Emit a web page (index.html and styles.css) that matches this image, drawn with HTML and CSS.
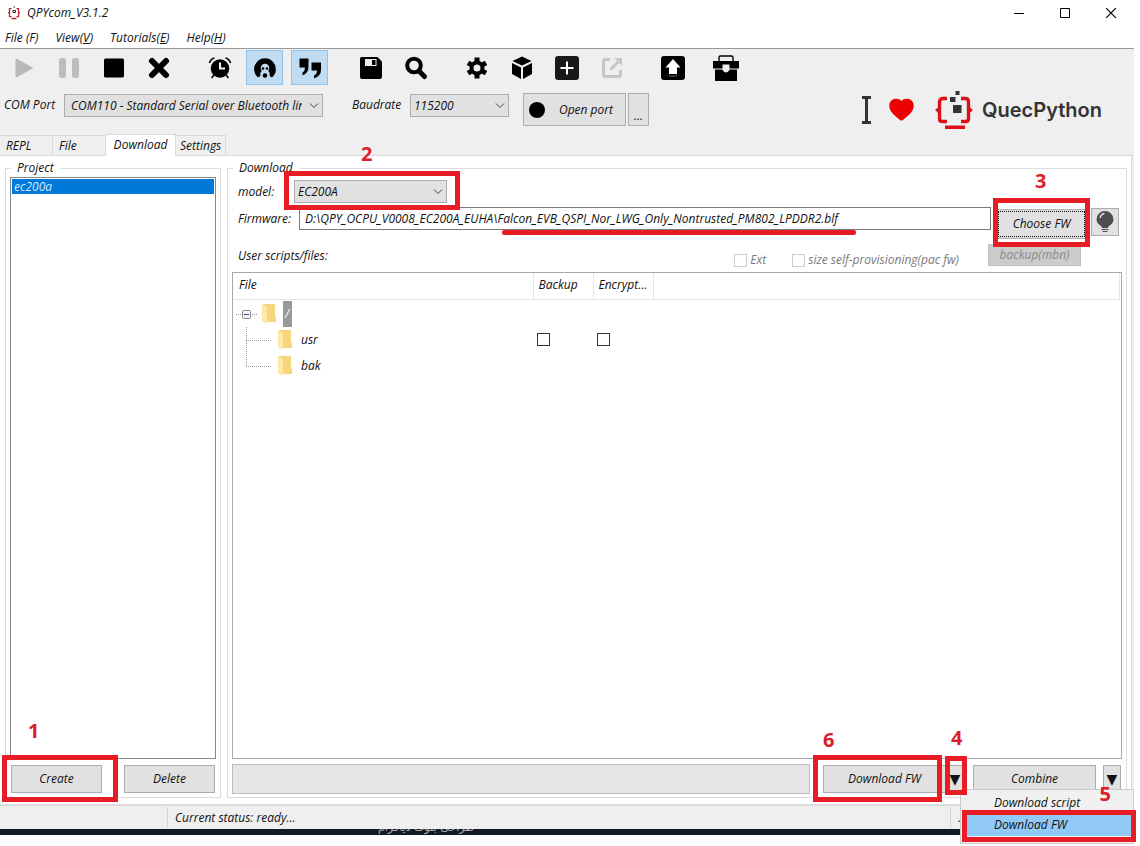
FILE: index.html
```html
<!DOCTYPE html>
<html lang="en">
<head>
<meta charset="utf-8">
<title>QPYcom_V3.1.2</title>
<link rel="stylesheet" href="styles.css">
</head>
<body>
<div class="app">
  <header class="titlebar">
    <svg class="app-icon" width="14" height="14" viewBox="0 0 14 14" fill="none" stroke="#c02030" stroke-width="1.300"><path d="M4.500 2.700H2.500v8h2M9.500 2.700h2v8h-2M1 6.700h1.500M11.500 6.700H13M4.500 12.500h5"/><path d="M6 4.500h2.500v2H6zM6.500 1h1.500" stroke="#222" stroke-width="1"/></svg>
    <h1 class="app-name">QPYcom_V3.1.2</h1>
    <div class="window-buttons">
      <button aria-label="Minimize"><svg width="10" height="10"><path d="M0 5.500h10" stroke="#000"/></svg></button>
      <button aria-label="Maximize"><svg width="10" height="10"><path d="M.5.5h9v9h-9z" fill="none" stroke="#000"/></svg></button>
      <button aria-label="Close"><svg width="10" height="10"><path d="M0 0l10 10M10 0L0 10" stroke="#000" stroke-width="1.2"/></svg></button>
    </div>
  </header>
  <nav class="menubar">
    <button>File (F)</button><button>View(<u>V</u>)</button><button>Tutorials(<u>E</u>)</button><button>Help(<u>H</u>)</button>
  </nav>
  <div class="toolbar">
    <div class="tool-group">
      <button aria-label="Run"><svg width="26" height="26" viewBox="0 0 26 26"><path d="M4.500 4v18q0 .8.800.500L21.500 13.500q.8-.5 0-1L5.300 3.500q-.8-.3-.8.500z" fill="#b8b8b8"/></svg></button>
      <button aria-label="Pause"><svg width="26" height="26" viewBox="0 0 26 26" fill="#bdbdbd"><rect x="3" y="3" width="7" height="20" rx="2.500"/><rect x="16" y="3" width="7" height="20" rx="2.500"/></svg></button>
      <button aria-label="Stop"><svg width="26" height="26" viewBox="0 0 26 26"><rect x="3" y="3.500" width="20" height="19" rx="1.500"/></svg></button>
      <button aria-label="Clear"><svg width="26" height="26" viewBox="0 0 26 26"><path d="M6 6l14 14M20 6L6 20" stroke="#000" stroke-width="6" stroke-linecap="round"/></svg></button>
    </div>
    <div class="tool-group">
      <button aria-label="Timer"><svg width="26" height="26" viewBox="0 0 26 26" fill="none" stroke="#000" stroke-width="2"><circle cx="13" cy="13.500" r="9.300" fill="#000" stroke="none"/><path d="M13 7.500v6h5" stroke="#eee"/><path d="M2.500 8q1-4 5-5M23.500 8q-1-4-5-5M7 20l-2.500 3M19 20l2.500 3" stroke-width="1.600"/></svg></button>
      <button class="checked" aria-label="Assistant"><svg width="26" height="26" viewBox="0 0 26 26"><path d="M6 22.500A10.900 10.900 0 1 1 20 22.500L17 20.500h-8z"/><circle cx="13" cy="13" r="4.300" fill="#bfdcf3"/><circle cx="13" cy="19.500" r="4.800" fill="#bfdcf3"/><circle cx="11" cy="13.500" r="1.300"/><circle cx="15" cy="13.500" r="1.300"/><circle cx="13" cy="20.500" r="2.300"/></svg></button>
      <button class="checked" aria-label="Quote"><svg width="26" height="26" viewBox="0 0 26 26"><path d="M2.500 3.500h9V12q0 6-6 8.500v-3q2.500-1.500 2.500-5H2.500zM14.500 7.500h9.500V15q0 6-7 8.500v-3q3-1.500 3-5h-5.500z"/></svg></button>
    </div>
    <div class="tool-group">
      <button aria-label="Save"><svg width="26" height="26" viewBox="0 0 26 26"><path d="M3.500 2h16L24 6.500v15q0 2.500-2 2.500H4q-2 0-2-2V3.500Q2 2 3.500 2z"/><path d="M7 4h11.500v7H7z" fill="#eee"/><path d="M14 5h3.500v5H14z"/></svg></button>
      <button aria-label="Search"><svg width="26" height="26" viewBox="0 0 26 26" fill="none" stroke="#000"><circle cx="11" cy="10.500" r="6.800" stroke-width="4"/><path d="M16 16l5.500 5.500" stroke-width="5" stroke-linecap="round"/></svg></button>
    </div>
    <div class="tool-group">
      <button aria-label="Settings"><svg width="26" height="26" viewBox="0 0 26 26" fill="none" stroke="#000"><path d="M13 2.500v21M4 7.800l18 10.400M4 18.200L22 7.800" stroke-width="5"/><circle cx="13" cy="13" r="5.500" fill="#eee" stroke-width="4"/></svg></button>
      <button aria-label="Package"><svg width="26" height="26" viewBox="0 0 26 26"><path d="M13 1.500L22.500 6 13 10.500 3.500 6zM3 8l9 4.500V24l-9-5zM23 8l-9 4.500V24l9-5z"/></svg></button>
      <button aria-label="Add"><svg width="26" height="26" viewBox="0 0 26 26"><rect x="1" y="1" width="24" height="24" rx="3" fill="#181818"/><path d="M13 6.500v13M6.500 13h13" stroke="#fff" stroke-width="2"/></svg></button>
      <button aria-label="Export"><svg width="26" height="26" viewBox="0 0 26 26" fill="none" stroke="#c6c6c6" stroke-width="3"><path d="M11 4.500H6Q4.500 4.500 4.500 6v14q0 1.500 1.500 1.500h14q1.500 0 1.500-1.500v-5M11.500 14.500L19 7"/><path d="M15 3h8v8z" fill="#c6c6c6" stroke="none"/></svg></button>
    </div>
    <div class="tool-group">
      <button aria-label="Upload"><svg width="26" height="26" viewBox="0 0 26 26"><rect x="1" y="1" width="24" height="24" rx="3"/><path d="M13 4l7.500 8.500H17V19H9v-6.500H5.500z" fill="#fff"/><path d="M9 21h8" stroke="#666"/></svg></button>
    </div>
    <button aria-label="Toolbox"><svg width="28" height="28" viewBox="0 0 28 28"><path d="M7 8V3.500Q7 2 8.500 2h11Q21 2 21 3.500V8" fill="none" stroke="#000" stroke-width="1.400"/><path d="M1 7h26v7.500H1zM3 15.500h22V27H3z"/><path d="M10.500 10.500h7V16q-3.500 5-7 0z" fill="#eee"/></svg></button>
  </div>
  <div class="portbar">
    <label for="port">COM Port</label>
    <div class="combo combo-port"><select id="port"><option>COM110 - Standard Serial over Bluetooth link</option></select><svg class="chevron" width="10" height="6"><path d="M1 .5l4 4 4-4" fill="none" stroke="#444"/></svg></div>
    <label class="baud-label" for="baud">Baudrate</label>
    <div class="combo combo-baud"><select id="baud"><option>115200</option></select><svg class="chevron" width="10" height="6"><path d="M1 .5l4 4 4-4" fill="none" stroke="#444"/></svg></div>
    <button class="btn open-port"><svg width="16" height="16"><circle cx="8" cy="8" r="8"/></svg>Open port</button>
    <button class="btn more">...</button>
    <div class="brand">
      <svg width="9" height="28"><path d="M0 1.500h9M0 26.500h9M4.500 1v26" stroke="#333" stroke-width="3"/></svg>
      <svg class="heart" width="25" height="23" viewBox="0 0 25 23"><path d="M12.500 3C9.500-.8.300-.5.300 8c0 5 5 9.500 10.700 14q1.500 1 3 0C19.700 17.500 24.700 13 24.700 8 24.700-.5 15.500-.8 12.500 3z" fill="#ec0000"/></svg>
      <svg width="38" height="38" viewBox="0 0 38 38"><path d="M12 7.500H8Q4.500 7.500 4.500 11v17Q4.500 30.500 7.500 30.500H12M26 7.500h4.500q3 0 3 3.500v17q0 2.500-3 2.500H26" fill="none" stroke="#dc1018" stroke-width="3.400"/><path d="M4.500 15.500L0 19l4.500 4zM33.500 15.500L38 19l-4.500 4zM10 34.500h20v3.500H10z" fill="#dc1018"/><path d="M15 6h5.500v5H15zM20.500 0h4v4h-4zM18 14h8.500v8H18z" fill="#333"/></svg>
      <span>QuecPython</span>
    </div>
  </div>
  <div class="tabs" role="tablist">
    <button role="tab">REPL</button><button role="tab">File</button><button role="tab" class="active" aria-selected="true">Download</button><button role="tab" class="tab-settings">Settings</button>
  </div>
  <main class="page">
    <fieldset class="group project">
      <legend>Project</legend>
      <ul class="list"><li>ec200a</li></ul>
      <div class="actions">
        <div class="marked mark-create"><button class="btn">Create</button><b>1</b></div>
        <button class="btn">Delete</button>
      </div>
    </fieldset>
    <fieldset class="group download">
      <legend>Download</legend>
      <div class="row model-row">
        <label for="model">model:</label>
        <div class="marked mark-model"><div class="combo combo-model"><select id="model"><option>EC200A</option></select><svg class="chevron" width="10" height="6"><path d="M1 .5l4 4 4-4" fill="none" stroke="#444"/></svg></div><b>2</b></div>
      </div>
      <div class="row firmware-row">
        <label for="fw">Firmware:</label>
        <div class="field"><input id="fw" type="text" value="D:\QPY_OCPU_V0008_EC200A_EUHA\Falcon_EVB_QSPI_Nor_LWG_Only_Nontrusted_PM802_LPDDR2.blf"></div>
        <div class="marked mark-choose"><button class="btn choose">Choose FW</button><b>3</b></div>
        <button class="btn bulb" aria-label="Hint"><svg width="18" height="22" viewBox="0 0 18 22"><path d="M9 0a8.500 8.500 0 0 1 8.500 8.500Q17.500 12 13 15q-1 1-1 2H6q0-1-1-2Q.5 12 .5 8.500A8.500 8.500 0 0 1 9 0z" fill="#4d4d4d"/><path d="M4 7q1-4 4.500-4.500" fill="none" stroke="#e1e1e1" stroke-width="1.300"/><path d="M5.500 18.500h7M6.500 20.500h5" stroke="#4d4d4d"/></svg></button>
      </div>
      <div class="row options-row">
        <span class="caption">User scripts/files:</span>
        <label class="check"><input type="checkbox" disabled>Ext</label>
        <label class="check check-size"><input type="checkbox" disabled>size self-provisioning(pac fw)</label>
        <button class="btn backup" disabled>backup(mbn)</button>
      </div>
      <div class="files">
        <table>
          <colgroup><col class="c-file"><col class="c-flag"><col class="c-flag"><col></colgroup>
          <thead><tr><th>File</th><th>Backup</th><th>Encrypt...</th><th></th></tr></thead>
          <tbody>
            <tr><td><div class="node"><svg width="22" height="26" fill="none"><path d="M0 13.500h22" stroke="#999" stroke-dasharray="1 1"/><rect x="6.500" y="9.500" width="8" height="8" rx="1" fill="#f4f4f8" stroke="#888"/><path d="M8 13.500h5" stroke="#3c50a0"/></svg><svg class="folder" width="14" height="22" viewBox="0 0 14 22"><path d="M1 1h12v12.500l1 .5v5H1z" fill="#f5d67b"/><path d="M0 1l5 3v17l-5-3z" fill="#ffe8a6"/></svg><span class="selected">/</span></div></td><td></td><td></td><td></td></tr>
            <tr><td><div class="node child"><svg width="36" height="26" fill="none" stroke="#999" stroke-dasharray="1 1"><path d="M10.500 0v26M10 13.500h26"/></svg><svg class="folder" width="14" height="22" viewBox="0 0 14 22"><path d="M1 1h12v12.500l1 .5v5H1z" fill="#f5d67b"/><path d="M0 1l5 3v17l-5-3z" fill="#ffe8a6"/></svg><span>usr</span></div></td><td><input type="checkbox" aria-label="Backup usr"></td><td><input type="checkbox" aria-label="Encrypt usr"></td><td></td></tr>
            <tr><td><div class="node child"><svg width="36" height="26" fill="none" stroke="#999" stroke-dasharray="1 1"><path d="M10.500 0v13M10 13.500h26"/></svg><svg class="folder" width="14" height="22" viewBox="0 0 14 22"><path d="M1 1h12v12.500l1 .5v5H1z" fill="#f5d67b"/><path d="M0 1l5 3v17l-5-3z" fill="#ffe8a6"/></svg><span>bak</span></div></td><td></td><td></td><td></td></tr>
          </tbody>
        </table>
      </div>
      <div class="run-row">
        <div class="progress"></div>
        <div class="marked mark-run"><button class="btn run">Download FW</button><b>6</b></div>
        <div class="marked mark-drop"><button class="btn drop" aria-label="Download options">▼</button><b>4</b></div>
        <button class="btn combine">Combine</button>
        <button class="btn drop drop-last" aria-label="Combine options">▼</button>
        <div class="popup" role="menu">
          <button role="menuitem">Download script</button>
          <div class="marked mark-item"><button role="menuitem" class="hot">Download FW</button><b>5</b></div>
        </div>
      </div>
    </fieldset>
  </main>
  <footer class="status"><span></span><span class="state">Current status: ready...</span><span class="tail">.</span></footer>
  <div class="desktop"><span lang="fa" dir="rtl">طراحی بلوت دیاگرام</span></div>
</div>
</body>
</html>
```

FILE: styles.css
```css
* { box-sizing: border-box; }
body {
  margin: 0;
  background: #fff;
  color: #111;
  font: italic 12px/16px "Open Sans", "Noto Sans", sans-serif;
}
button, input, select { font: inherit; color: inherit; margin: 0; padding: 0; }
button { border: 0; background: none; }
svg { display: block; flex: none; }
.app {
  display: flex;
  flex-direction: column;
  min-height: 100vh;
  padding: 0 6px 11px 0;
  overflow: hidden;
}
.titlebar { display: flex; align-items: center; height: 26px; padding-left: 7px; gap: 6px; }
.app-name { margin: 0; font: inherit; }
.window-buttons { display: flex; margin-left: auto; }
.window-buttons button { display: grid; place-items: center; width: 46px; height: 26px; }
.menubar { display: flex; gap: 17px; height: 22px; padding: 1px 0 0 5px; }
.toolbar {
  display: flex;
  gap: 24px;
  height: 37px;
  padding: 1px 0 0 5px;
  border-top: 1px solid #999;
  background: #efefef;
}
.toolbar > button { margin-left: -8px; }
.tool-group { display: flex; gap: 8px; }
.toolbar button { display: grid; place-items: center; width: 37px; height: 35px; border: 1px solid transparent; }
.toolbar .checked { background: #bfdcf3; border-color: #92c3ea; }
.portbar { display: flex; height: 48px; padding: 8px 32px 7px 4px; background: #efefef; }
.portbar label { padding-top: 4px; width: 60px; }
.portbar .baud-label { width: 58px; margin-left: 29px; }
.combo { position: relative; height: 23px; margin-top: 1px; }
.combo select {
  appearance: none;
  width: 100%;
  height: 100%;
  padding: 0 20px 0 6px;
  border: 1px solid #adadad;
  border-radius: 0;
  background: #e1e1e1;
}
.chevron { position: absolute; right: 4px; top: 9px; pointer-events: none; }
.combo-port { width: 259px; }
.combo-baud { width: 99px; }
.combo-model { width: 153px; margin: 0; }
.combo-baud select, .combo-model select { padding-left: 3px; }
.btn { border: 1px solid #adadad; background: #e1e1e1; height: 28px; text-align: center; }
.open-port { display: flex; align-items: center; gap: 14px; width: 103px; height: 33px; margin-left: 14px; padding-left: 5px; }
.more { width: 21px; height: 33px; margin-left: 2px; padding-top: 12px; }
.brand {
  display: flex;
  align-items: center;
  margin: 0 0 0 auto;
  font: 600 20px/24px Inter, Roboto, sans-serif;
  color: #333;
}
.heart { margin: 0 21px 0 18px; }
.brand span { margin-left: 9px; }
.tabs { display: flex; align-items: flex-end; height: 23px; background: #efefef; border-bottom: 1px solid #d9d9d9; }
.tabs button { width: 53px; height: 20px; padding-left: 6px; text-align: left; border: 1px solid #d9d9d9; border-width: 1px 1px 0 0; }
.tabs .active { width: 70px; height: 22px; margin-bottom: -1px; padding: 0 0 2px; text-align: center; background: #fff; }
.tabs .tab-settings { width: 50px; padding-left: 4px; }
.page {
  display: flex;
  flex: 1;
  gap: 6px;
  margin-right: 2px;
  padding: 5px 4px 6px 5px;
  border-right: 1px solid #d9d9d9;
  box-shadow: 2px 0 #efefef;
}
.group { display: flex; flex-direction: column; min-width: 0; margin: 0; padding: 0 5px 3px 4px; border: 1px solid #dcdcdc; }
legend { margin-left: 1px; padding: 0 6px; line-height: 14px; }
.project { width: 216px; }
.project .list { margin-right: -1px; }
.download { flex: 1; padding-right: 4px; }
.list { flex: 1; margin: 2px 0 6px; padding: 1px; list-style: none; border: 1px solid #828790; }
.list li { padding-left: 2px; line-height: 15px; background: #0078d7; color: #cfe8ff; }
.actions { display: flex; justify-content: space-between; margin-bottom: 1px; padding-left: 1px; }
.actions .btn { width: 91px; }
.row { display: flex; }
.row > label, .caption { padding-left: 6px; }
.model-row { height: 23px; margin-top: 5px; }
.model-row > label { width: 62px; padding-top: 4px; }
.firmware-row { height: 35px; margin-top: 4px; padding-right: 3px; }
.firmware-row > label { width: 67px; padding-top: 4px; }
.field { position: relative; flex: 1; height: 23px; }
.field input { width: 100%; height: 23px; padding: 0 5px 1px; border: 1px solid #7a7a7a; background: #fff; }
.field::after { content: ""; position: absolute; left: 203px; top: 23px; width: 354px; height: 5px; border-radius: 2px; background: #e81c24; }
.choose { width: 91px; height: 30px; outline: 1px dotted #000; outline-offset: -3px; }
.mark-choose { margin: 2px 4px 0 5px; }
.bulb { display: grid; place-items: center; width: 28px; margin-top: 1px; }
.options-row { height: 28px; margin-top: 2px; padding-right: 41px; }
.caption { padding-top: 4px; margin-right: auto; }
.check { display: flex; align-items: center; gap: 3px; height: 16px; margin-top: 8px; color: #7a7a7a; }
.check-size { margin: 8px 29px 0 20px; }
input[type="checkbox"] { appearance: none; flex: none; width: 13px; height: 13px; border: 1px solid #333; background: #fff; display: block; }
input[type="checkbox"]:disabled { border-color: #ccc; }
.backup { width: 93px; height: 22px; border-color: #bfbfbf; background: #ccc; color: #8a8a8a; }
.files { flex: 1; padding: 0 1px; border: 1px solid #a5a8ad; }
table { width: 100%; border-collapse: collapse; table-layout: fixed; }
.c-file { width: 299px; }
.c-flag { width: 60px; }
th { height: 26px; padding: 0 0 1px 5px; font-weight: 400; text-align: left; border: 1px solid #e5e5e5; border-width: 0 1px 1px 0; }
td { height: 26px; padding: 0 0 0 4px; }
td:first-child { padding-left: 2px; }
tbody::before { content: ""; display: block; height: 1px; }
.node { display: flex; align-items: center; height: 26px; }
.folder { margin: 0 7px 0 4px; }
.child .folder { margin: 0 9px 0 6px; }
.selected { width: 9px; padding-left: 2px; line-height: 26px; background: #999; color: #fff; }
.run-row { position: relative; display: flex; margin-top: 5px; padding-right: 1px; }
.run-row .btn { margin-top: 1px; }
.progress { flex: 1; height: 30px; margin-right: 13px; border: 1px solid #bcbcbc; background: #e6e6e6; }
.run { width: 123px; }
.drop { display: grid; place-items: center; width: 18px; font: 14px/16px "DejaVu Sans", sans-serif; }
.mark-drop { margin-right: 9px; }
.combine { width: 123px; }
.drop-last { margin-left: 7px; }
.status { display: flex; align-items: center; height: 25px; border-top: 2px solid #dcdcdc; background: #efefef; }
.status span { height: 21px; width: 168px; padding: 3px 0 0 7px; border-right: 1px solid #d5d5d5; }
.status .state { flex: 1; width: auto; }
.status .tail { width: 183px; border: 0; }
.desktop { height: 6px; overflow: hidden; background: #121a26; color: #aaa; padding-left: 378px; font: 11px/16px "DejaVu Sans", sans-serif; }
.desktop span { display: block; width: max-content; margin-top: -9px; }

/* Numbered walkthrough markers */
.marked { position: relative; }
.marked::after { content: ""; position: absolute; z-index: 3; border: 5px solid #e81c24; pointer-events: none; }
.marked b { position: absolute; z-index: 4; font: 700 20px/20px "Open Sans", sans-serif; color: #dc202a; }
.mark-create::after { inset: -10px -16px -9px -9px; }
.mark-create b { left: 17px; top: -44px; }
.mark-model::after { inset: -9px -13px -7px -10px; }
.mark-model b { left: 67px; top: -36px; }
.mark-choose::after { inset: -11px -3px -5px -3px; }
.mark-choose b { left: 39px; top: -38px; }
.mark-run::after { inset: -9px 4px -8px -10px; }
.mark-run b { left: 0; top: -34px; }
.mark-drop::after { inset: -8px -3px -1px -1px; }
.mark-drop b { left: 5px; top: -36px; }
.popup { position: absolute; z-index: 2; right: -12px; top: 25px; width: 174px; padding: 2px 2px 7px; background: #f0f0f0; border: 1px solid #ccc; }
.popup button { display: block; width: 100%; height: 22px; padding-left: 31px; text-align: left; }
.popup .hot { background: #91c9f7; }
.mark-item::after { inset: -4px -5px -6px -1px; }
.mark-item b { right: 20px; top: -30px; }
```
